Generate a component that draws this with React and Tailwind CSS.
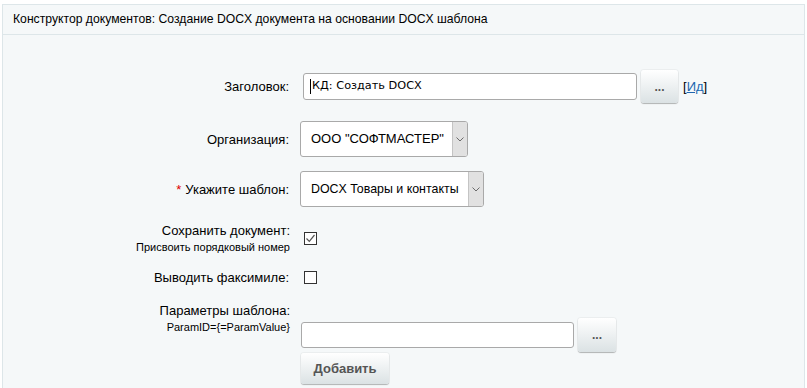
import React from 'react';

const font = { fontFamily: '"Liberation Sans", Arial, sans-serif' };

function Label({ children, required }) {
  return (
    <div className="w-[287px] shrink-0 pr-[1px] text-right text-[13px] leading-[15px] text-[#000]">
      {required && <span className="text-[#d00] mr-1">*</span>}
      {children}
    </div>
  );
}

function DotsButton({ className = '' }) {
  return (
    <button
      className={`rounded-[3px] bg-gradient-to-b from-[#ffffff] to-[#dbe2e4] shadow-[0_1px_1px_rgba(0,0,0,0.25),0_0_0_1px_rgba(0,0,0,0.04)] text-[#555] text-[12px] font-bold leading-none ${className}`}
    >
      ...
    </button>
  );
}

function Select({ value, width, size = 'text-[13px]' }) {
  return (
    <div
      className={`flex h-[36px] ${width} rounded-[3px] border border-[#a9a9a9] bg-white overflow-hidden`}
    >
      <div className={`flex-1 flex items-center pl-[10px] ${size} text-[#000] whitespace-nowrap`}>
        {value}
      </div>
      <div className="w-[15px] border-l border-[#c4c4c4] bg-[#e1e1e1] flex items-center justify-center">
        <svg width="8" height="5" viewBox="0 0 8 5">
          <path d="M0.5 0.5 L4 4 L7.5 0.5" fill="none" stroke="#6b6b6b" strokeWidth="1" />
        </svg>
      </div>
    </div>
  );
}

function Checkbox({ checked }) {
  return (
    <div className="w-[13px] h-[13px] border border-[#333] bg-white flex items-center justify-center">
      {checked && (
        <svg width="11" height="11" viewBox="0 0 11 11">
          <path d="M1.5 5.5 L4.3 8.3 L9.5 2" fill="none" stroke="#555" strokeWidth="1.2" />
        </svg>
      )}
    </div>
  );
}

export default function App() {
  return (
    <div className="w-[807px] h-[388px] bg-white pt-[4px] pl-[2px] pr-[2px] overflow-hidden" style={font}>
      <div className="h-[400px] border border-[#dde6e9] bg-[#f5f8f9]">
        <div className="h-[30px] border-b border-[#dde6e9] flex items-center pl-[10px] text-[12.2px] text-[#000]">
          Конструктор документов: Создание DOCX документа на основании DOCX шаблона
        </div>

        <div className="pt-[35px]">
          {/* Заголовок */}
          <div className="flex items-center h-[33px]">
            <Label>Заголовок:</Label>
            <div className="ml-[13px] w-[334px] h-[27px] rounded-[3px] border border-[#a9a9a9] bg-white flex items-center pl-[6px]">
              <span className="w-px h-[15px] bg-black mr-[1px]" />
              <span className="text-[11.3px] text-[#000]" style={{ fontFamily: '"DejaVu Sans", Tahoma, sans-serif' }}>
                КД: Создать DOCX
              </span>
            </div>
            <DotsButton className="ml-[4px] w-[37px] h-[33px]" />
            <span className="ml-[5px] text-[13px] text-[#000]">
              [<a href="#" className="text-[#2067b0] underline">Ид</a>]
            </span>
          </div>

          {/* Организация */}
          <div className="flex items-center mt-[18px]">
            <Label>Организация:</Label>
            <div className="ml-[10px]">
              <Select value={'ООО "СОФТМАСТЕР"'} width="w-[168px]" />
            </div>
          </div>

          {/* Шаблон */}
          <div className="flex items-center mt-[14px]">
            <Label required>Укажите шаблон:</Label>
            <div className="ml-[10px]">
              <Select value="DOCX Товары и контакты" width="w-[184px]" size="text-[12.4px]" />
            </div>
          </div>

          {/* Сохранить документ */}
          <div className="flex items-start mt-[16px]">
            <div className="w-[287px] shrink-0 text-right">
              <div className="text-[13px] leading-[15px] text-[#000]">Сохранить документ:</div>
              <div className="text-[11px] leading-[14px] mt-[2px] text-[#000]">Присвоить порядковый номер</div>
            </div>
            <div className="ml-[14px] mt-[9px]">
              <Checkbox checked />
            </div>
          </div>

          {/* Факсимиле */}
          <div className="flex items-center mt-[16px] h-[14px]">
            <Label>Выводить факсимиле:</Label>
            <div className="ml-[14px]">
              <Checkbox />
            </div>
          </div>

          {/* Параметры */}
          <div className="flex items-start mt-[19px]">
            <div className="w-[287px] shrink-0 text-right">
              <div className="text-[13px] leading-[15px] text-[#000]">Параметры шаблона:</div>
              <div className="text-[11px] leading-[14px] mt-[2px] text-[#000]">ParamID={'{'}=ParamValue{'}'}</div>
            </div>
            <div className="ml-[11px] mt-[15px] flex flex-col items-start">
              <div className="flex items-center">
                <div className="w-[273px] h-[26px] rounded-[3px] border border-[#a9a9a9] bg-white" />
                <DotsButton className="ml-[4px] w-[38px] h-[34px]" />
              </div>
              <button className="mt-[1px] w-[88px] h-[31px] rounded-[3px] bg-gradient-to-b from-[#ffffff] to-[#dbe2e4] shadow-[0_1px_1px_rgba(0,0,0,0.25),0_0_0_1px_rgba(0,0,0,0.04)] text-[13px] font-bold text-[#555]">
                Добавить
              </button>
            </div>
          </div>
        </div>
      </div>
    </div>
  );
}
